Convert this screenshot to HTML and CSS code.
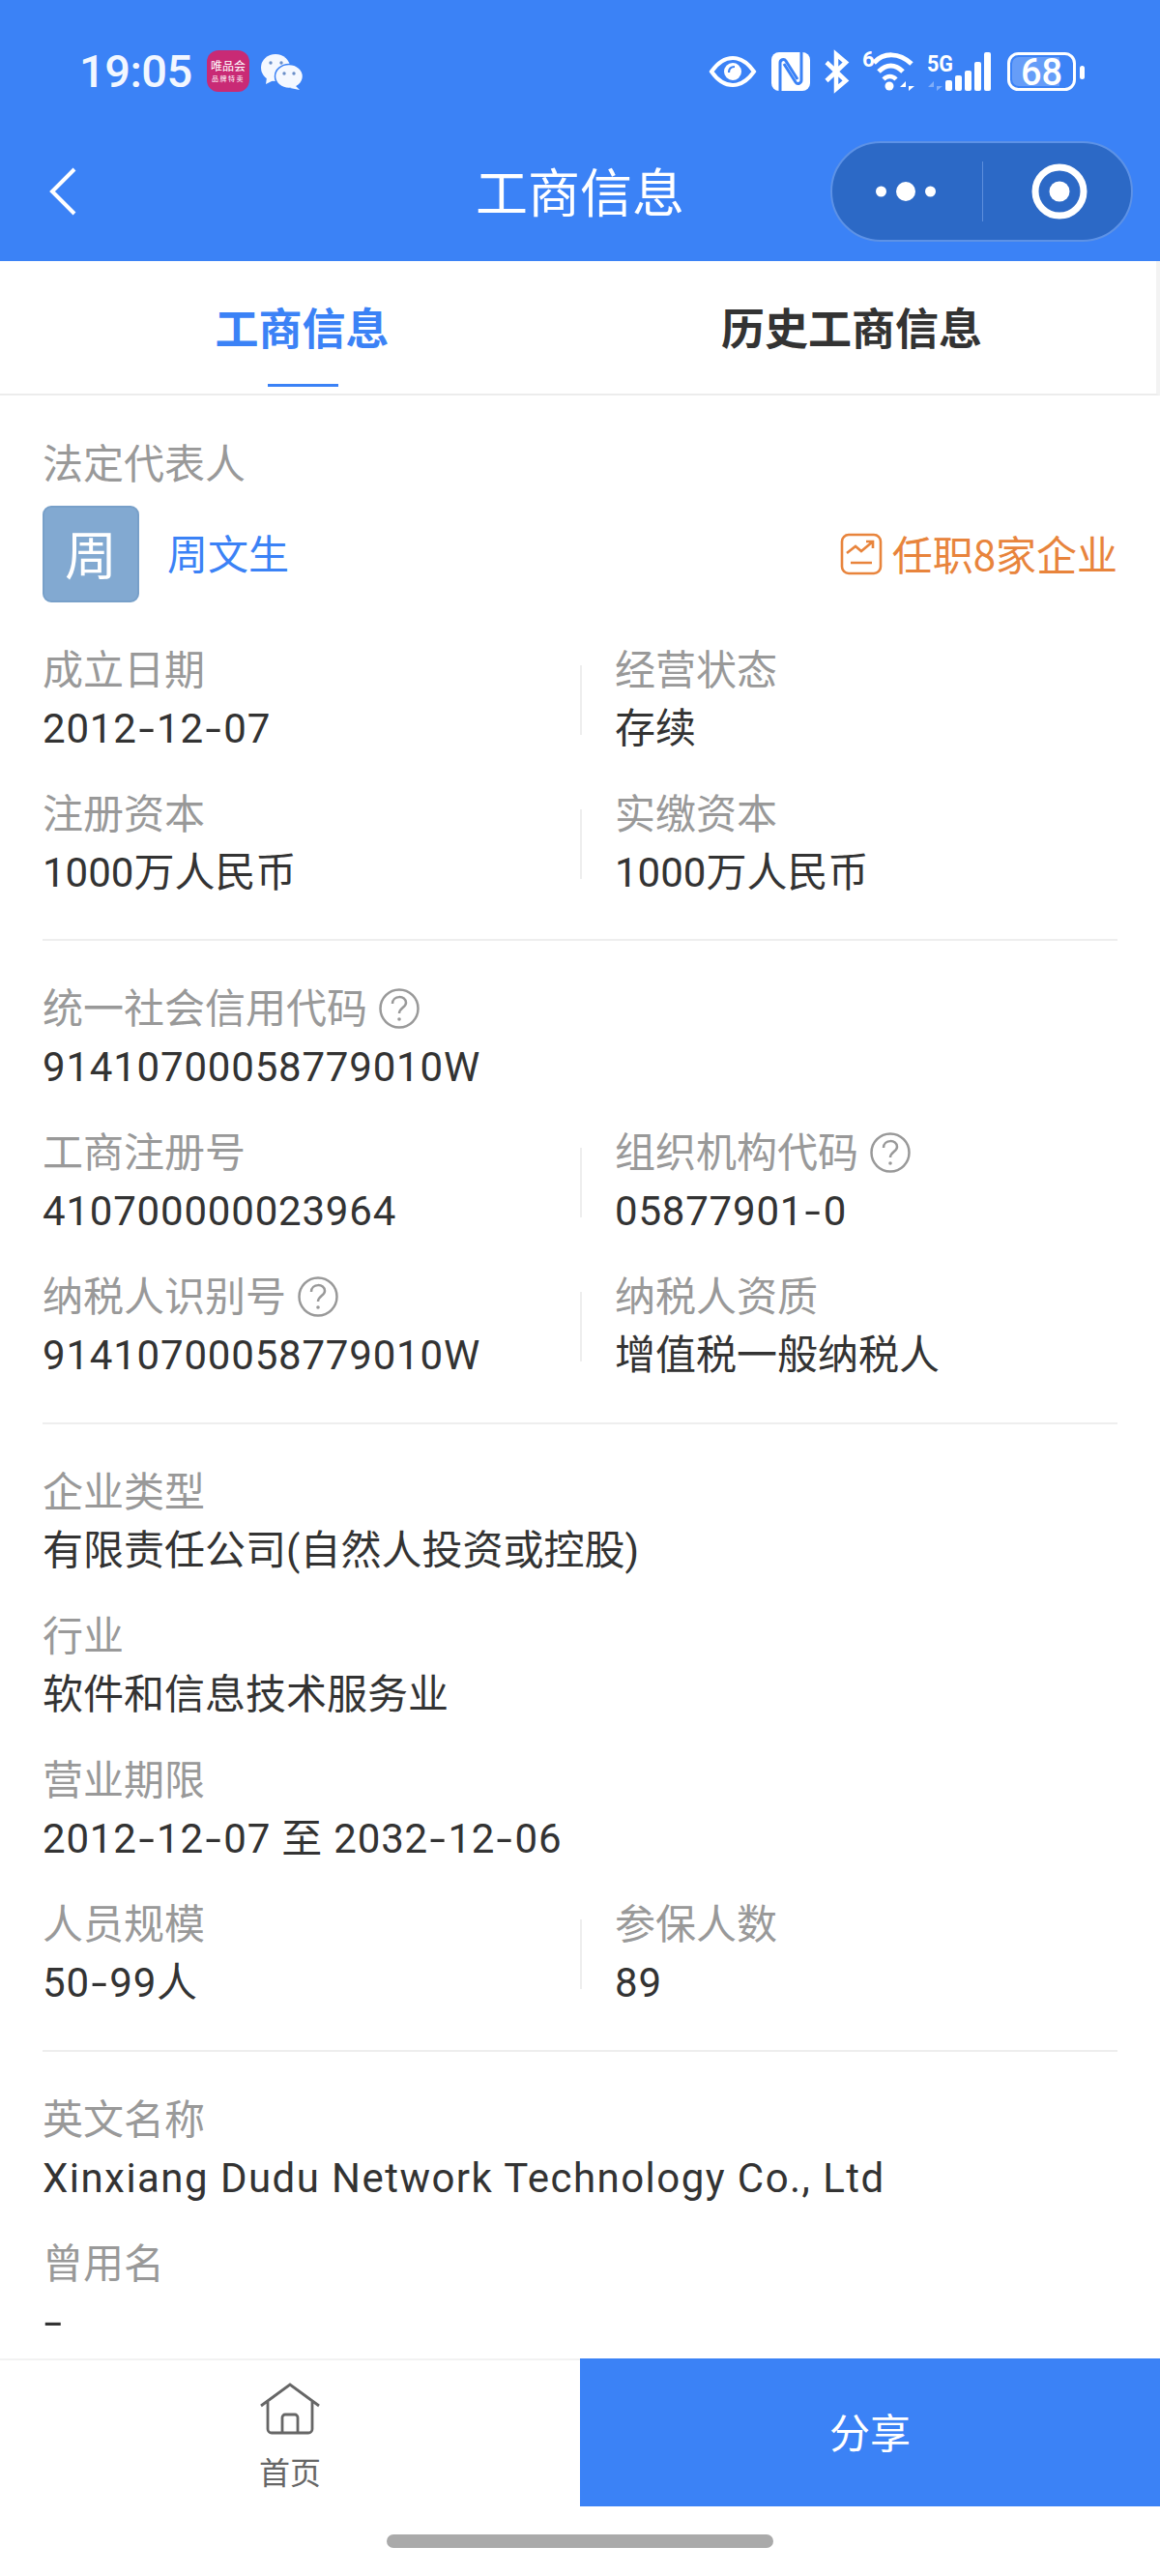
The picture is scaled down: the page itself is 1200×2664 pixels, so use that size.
FILE: index.html
```html
<!DOCTYPE html>
<html lang="zh-CN">
<head>
<meta charset="utf-8">
<title>工商信息</title>
<link rel="stylesheet" href="styles.css">
</head>
<body>
<div class="page">
  <header class="header">
    <div class="status">
      <div class="status-left">
        <span class="time">19:05</span>
        <span class="vip"><span class="vip-a">唯品会</span><span class="vip-b">品牌特卖</span></span>
        <svg class="wechat" viewBox="0 0 44 38"><ellipse cx="15" cy="15" rx="15" ry="14" fill="#f4f8ff"/><path d="M6 25l-1 7 8-4z" fill="#f4f8ff"/><ellipse cx="29" cy="24" rx="14.500" ry="12.500" fill="#f4f8ff" stroke="#3b82f6" stroke-width="1.500"/><path d="M35 33l5 5-10-2z" fill="#f4f8ff"/><circle cx="10" cy="10" r="1.700" fill="#6a8fc8"/><circle cx="21" cy="10" r="1.700" fill="#6a8fc8"/><circle cx="24" cy="21" r="1.700" fill="#6a8fc8"/><circle cx="34" cy="21" r="1.700" fill="#6a8fc8"/></svg>
      </div>
      <div class="status-right">
        <svg class="i-eye" viewBox="0 0 48 32"><path d="M2 16C9 6 16 2 24 2s15 4 22 14c-7 10-14 14-22 14S9 26 2 16z" fill="none" stroke="#fff" stroke-width="4"/><circle cx="24" cy="16" r="9" fill="#fff"/><path d="M20 17c0-4 2-6 6-6" stroke="#3b82f6" stroke-width="2.200" fill="none"/></svg>
        <svg class="i-nfc" viewBox="0 0 40 40"><rect width="40" height="40" rx="8" fill="#fff"/><path d="M9 40V11c0-3 4-5 6-2l12 19" fill="none" stroke="#3b82f6" stroke-width="3"/><path d="M31 0v29c0 3-4 5-6 2L13 12" fill="none" stroke="#3b82f6" stroke-width="3"/></svg>
        <svg class="i-bt" viewBox="0 0 27 40"><path d="M3 10.500l20 19-10 8.500V2l10 8.500-20 19" fill="none" stroke="#fff" stroke-width="4.500"/></svg>
        <svg class="i-wifi" viewBox="0 0 55 42"><text x="0" y="16" class="mini" font-size="22">6</text><path d="M12 12C22 1 38 1 51 13" fill="none" stroke="#fff" stroke-width="5"/><path d="M17 21C25 13 34 13 42 21" fill="none" stroke="#fff" stroke-width="5"/><path d="M22 29C26 25 31 25 35 29" fill="none" stroke="#fff" stroke-width="4.500"/><circle cx="28" cy="36" r="4.500" fill="#fff"/><path d="M45 41V31l-6 6h6zM48 31v10l6-5h-6z" fill="#fff"/></svg>
        <svg class="i-sig" viewBox="0 0 66 40"><text x="0" y="20" class="mini" font-size="24" textLength="27" lengthAdjust="spacingAndGlyphs">5G</text><path d="M7 40V30l-6 6h6zM10 30v10l6-5h-6z" fill="#fff" opacity=".35"/><rect x="19" y="29" width="7" height="11" rx="2" fill="#fff"/><rect x="29" y="24" width="7" height="16" rx="2" fill="#fff"/><rect x="39" y="19" width="7" height="21" rx="2" fill="#fff"/><rect x="49" y="10" width="7" height="30" rx="2" fill="#fff"/><rect x="59" y="0" width="7" height="40" rx="2" fill="#fff"/></svg>
        <svg class="i-bat" viewBox="0 0 80 40"><rect x="1.500" y="1.500" width="68" height="37" rx="10" fill="none" stroke="#fff" stroke-width="3"/><path d="M12 5h42v30H12a7 7 0 0 1-7-7V12a7 7 0 0 1 7-7z" fill="#fff" opacity=".22"/><text x="35.500" y="34" class="bat" font-size="38" text-anchor="middle">68</text><rect x="75" y="14" width="5" height="14" rx="2.500" fill="#fff"/></svg>
      </div>
    </div>
    <div class="nav">
      <svg class="back" viewBox="0 0 28 50"><path d="M26 2L3 25l23 23" fill="none" stroke="#fff" stroke-width="4"/></svg>
      <h1 class="title">工商信息</h1>
      <div class="capsule">
        <svg class="dots" viewBox="0 0 62 24"><circle cx="5.500" cy="12" r="5.500" fill="#fff"/><circle cx="31" cy="12" r="10" fill="#fff"/><circle cx="56.500" cy="12" r="5.500" fill="#fff"/></svg>
        <span class="cap-sep"></span>
        <svg class="target" viewBox="0 0 58 58"><circle cx="29" cy="29" r="25" fill="none" stroke="#fff" stroke-width="7"/><circle cx="29" cy="29" r="10.500" fill="#fff"/></svg>
      </div>
    </div>
  </header>

  <nav class="tabs">
    <div class="tab tab-on">工商信息</div>
    <div class="tab tab-off">历史工商信息</div>
  </nav>

  <main class="main">
    <section class="section">
      <div class="label">法定代表人</div>
      <div class="person">
        <span class="avatar">周</span>
        <span class="name">周文生</span>
        <span class="jobs">
          <svg class="jobs-icon" viewBox="0 0 44 44"><rect x="2" y="2" width="40" height="40" rx="7" fill="none" stroke="#e8843c" stroke-width="2.600"/><path d="M7 21l9-7 6 5 12-10M27 9h7v7M11 31h22" fill="none" stroke="#e8843c" stroke-width="2.600"/></svg>
          任职8家企业
        </span>
      </div>
      <div class="grid">
        <div class="field"><div class="label">成立日期</div><div class="value num">2012<span class="hy">-</span>12<span class="hy">-</span>07</div></div>
        <span class="sep"></span>
        <div class="field field-r"><div class="label">经营状态</div><div class="value">存续</div></div>
        <div class="field"><div class="label">注册资本</div><div class="value">1000万人民币</div></div>
        <span class="sep"></span>
        <div class="field field-r"><div class="label">实缴资本</div><div class="value">1000万人民币</div></div>
      </div>
    </section>

    <section class="section">
      <div class="field"><div class="label">统一社会信用代码 <svg class="q" viewBox="0 0 44 44"><circle cx="22" cy="22" r="19.500" fill="none" stroke="#999" stroke-width="2.500"/><path d="M15 17c0-9 14-9 14-1 0 5-7 5-7 11" fill="none" stroke="#999" stroke-width="2.500"/><circle cx="22" cy="33" r="1.800" fill="#999"/></svg></div><div class="value num">91410700058779010W</div></div>
      <div class="grid">
        <div class="field"><div class="label">工商注册号</div><div class="value num">410700000023964</div></div>
        <span class="sep"></span>
        <div class="field field-r"><div class="label">组织机构代码 <svg class="q" viewBox="0 0 44 44"><circle cx="22" cy="22" r="19.500" fill="none" stroke="#999" stroke-width="2.500"/><path d="M15 17c0-9 14-9 14-1 0 5-7 5-7 11" fill="none" stroke="#999" stroke-width="2.500"/><circle cx="22" cy="33" r="1.800" fill="#999"/></svg></div><div class="value num">05877901<span class="hy">-</span>0</div></div>
        <div class="field"><div class="label">纳税人识别号 <svg class="q" viewBox="0 0 44 44"><circle cx="22" cy="22" r="19.500" fill="none" stroke="#999" stroke-width="2.500"/><path d="M15 17c0-9 14-9 14-1 0 5-7 5-7 11" fill="none" stroke="#999" stroke-width="2.500"/><circle cx="22" cy="33" r="1.800" fill="#999"/></svg></div><div class="value num">91410700058779010W</div></div>
        <span class="sep"></span>
        <div class="field field-r"><div class="label">纳税人资质</div><div class="value">增值税一般纳税人</div></div>
      </div>
    </section>

    <section class="section">
      <div class="field"><div class="label">企业类型</div><div class="value">有限责任公司(自然人投资或控股)</div></div>
      <div class="field"><div class="label">行业</div><div class="value">软件和信息技术服务业</div></div>
      <div class="field"><div class="label">营业期限</div><div class="value num">2012<span class="hy">-</span>12<span class="hy">-</span>07 至 2032<span class="hy">-</span>12<span class="hy">-</span>06</div></div>
      <div class="grid">
        <div class="field"><div class="label">人员规模</div><div class="value num">50<span class="hy">-</span>99人</div></div>
        <span class="sep"></span>
        <div class="field field-r"><div class="label">参保人数</div><div class="value num">89</div></div>
      </div>
    </section>

    <section class="section section-last">
      <div class="field"><div class="label">英文名称</div><div class="value en">Xinxiang Dudu Network Technology Co., Ltd</div></div>
      <div class="field"><div class="label">曾用名</div><div class="value"><span class="hy hy-solo">-</span></div></div>
    </section>
  </main>

  <footer class="bottom">
    <div class="home">
      <svg class="home-icon" viewBox="0 0 64 54"><path d="M2 24L32 2l30 22M9 20v28a4 4 0 0 0 4 4h38a4 4 0 0 0 4-4V20M24 52V36a3 3 0 0 1 3-3h10a3 3 0 0 1 3 3v16" fill="none" stroke="#666" stroke-width="2.800"/></svg>
      <span class="home-text">首页</span>
    </div>
    <div class="share">分享</div>
  </footer>
  <div class="gesture"><span class="gesture-bar"></span></div>
</div>
</body>
</html>
```

FILE: styles.css
```css
* { box-sizing: border-box; }
html, body { margin: 0; padding: 0; background: #fff; }
body { font-family: "Noto Sans CJK SC", "Noto Sans", sans-serif; }
.page { width: 1200px; height: 2664px; display: flex; flex-direction: column; overflow: hidden; }

.header { height: 270px; background: #3b82f6; color: #fff; flex: none; }
.status { height: 146px; padding: 51px 78px 0 82px; display: flex; justify-content: space-between; align-items: flex-start; }
.status-left { display: flex; align-items: center; height: 45px; }
.time { font-family: "Roboto", sans-serif; font-weight: 500; font-size: 47px; line-height: 45px; width: 132px; color: #f2f7ff; letter-spacing: -0.5px; }
.vip { width: 44px; height: 43px; border-radius: 12px; background: #c92a75; display: flex; flex-direction: column; align-items: center; justify-content: center; margin-right: 12px; color: #fff; }
.vip-a { font-size: 12px; line-height: 16px; }
.vip-b { font-size: 7px; line-height: 11px; letter-spacing: 1.500px; white-space: nowrap; }
.wechat { width: 44px; height: 38px; }
.status-right { display: flex; align-items: center; height: 45px; }
.status-right svg { flex: none; display: block; overflow: visible; }
.i-eye { width: 48px; height: 32px; margin-right: 16px; }
.i-nfc { width: 40px; height: 40px; margin-right: 14px; }
.i-bt { width: 27px; height: 40px; margin-right: 13px; }
.i-wifi { width: 55px; height: 42px; margin-right: 12px; }
.i-sig { width: 66px; height: 40px; margin-right: 17px; }
.i-bat { width: 80px; height: 40px; }
.mini { font-family: "Roboto", sans-serif; font-weight: 700; fill: #fff; }
.bat { font-family: "Roboto", sans-serif; font-weight: 500; fill: #fff; }

.nav { height: 124px; display: grid; grid-template-columns: 1fr auto 1fr; align-items: start; padding: 0 28px; }
.back { width: 28px; height: 50px; margin: 27px 0 0 23px; }
.title { margin: 24px 0 0; font-weight: 400; font-size: 54px; line-height: 54px; }
.capsule { justify-self: end; width: 313px; height: 104px; border-radius: 52px; background: #2c69c6; border: 2px solid #5d92e6; display: flex; align-items: center; }
.dots { width: 62px; height: 24px; margin-left: 45px; }
.cap-sep { width: 1px; height: 62px; background: #5d8fdc; margin-left: 48px; }
.target { width: 58px; height: 58px; margin-left: 50px; }

.tabs { flex: none; height: 139px; border-bottom: 2px solid #ececec; border-right: 4px solid #f3f3f3; display: grid; grid-template-columns: 598px 1fr; }
.tab { text-align: center; font-size: 45px; line-height: 136px; font-weight: 700; color: #333; position: relative; height: 137px; }
.tab-on { color: #3b82f6; padding-left: 27px; }
.tab-off { padding-right: 32px; }
.tab-on::after { content: ""; position: absolute; left: 277px; top: 127px; width: 73px; height: 3px; background: #3b82f6; }

.main { flex: 1; min-height: 0; overflow: hidden; padding-top: 1px; }
.section { margin: 0 44px; padding: 40px 0 38px; border-bottom: 2px solid #eeeeee; }
.section:first-child { padding-bottom: 37px; }
.section-last { border-bottom: 0; padding-bottom: 0; }
.label { font-size: 42px; line-height: 53px; color: #999; height: 61px; white-space: nowrap; }
.value { font-size: 42px; line-height: 59px; color: #333; height: 61px; font-family: "Roboto", "Noto Sans CJK SC", sans-serif; white-space: nowrap; }
.num { letter-spacing: 0.8px; }
.en { letter-spacing: 1.450px; }
.hy { display: inline-block; transform: scaleX(1.4); margin: 0 4px; }
.hy-solo { margin-left: 5px; transform: scaleX(1.6); }
.field + .field, .field + .grid { margin-top: 27px; }
.grid { display: grid; grid-template-columns: 556px 2px 1fr; row-gap: 27px; align-items: center; }
.field-r { padding-left: 34px; margin-top: 0 !important; }
.grid .field { margin-top: 0; }
.sep { width: 2px; height: 72px; background: #eeeeee; }
.q { width: 44px; height: 44px; vertical-align: -7px; margin-left: 2px; }

.person { display: flex; align-items: center; height: 100px; margin: 12px 0 40px; }
.avatar { width: 100px; height: 100px; border-radius: 9px; background: #82a9d1; border: 2px solid #78a0c9; color: #fff; font-size: 54px; padding-bottom: 4px; display: flex; align-items: center; justify-content: center; flex: none; }
.name { font-size: 42px; color: #3b82f6; margin-left: 29px; flex: 1; padding-bottom: 5px; }
.jobs { font-size: 42px; color: #e8843c; display: flex; align-items: center; font-family: "Noto Sans CJK SC", sans-serif; padding-bottom: 4px; }
.jobs-icon { width: 44px; height: 44px; margin-right: 10px; margin-top: 4px; }

.bottom { flex: none; height: 153px; display: grid; grid-template-columns: 1fr 1fr; border-top: 2px solid #f2f2f2; }
.home { display: flex; flex-direction: column; align-items: center; padding-top: 23px; }
.home-icon { width: 64px; height: 54px; }
.home-text { font-size: 32px; line-height: 44px; color: #666; margin-top: 15px; }
.share { background: #3b82f6; color: #fff; font-size: 42px; display: flex; align-items: center; justify-content: center; margin-top: -2px; padding-bottom: 4px; }
.gesture { flex: none; height: 72px; display: flex; justify-content: center; padding-top: 29px; }
.gesture-bar { width: 400px; height: 14px; border-radius: 7px; background: #aaaaaa; }
```
